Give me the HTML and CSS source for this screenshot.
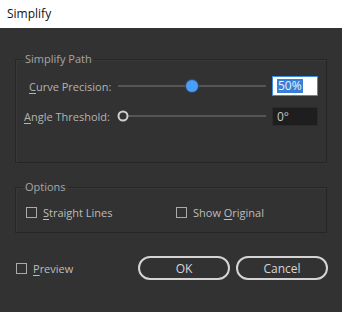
FILE: index.html
```html
<!DOCTYPE html>
<html>
<head>
<meta charset="utf-8">
<link rel="stylesheet" href="styles.css">
</head>
<body>
<div class="dialog">
  <div class="titlebar">Simplify</div>
  <div class="content">
    <fieldset class="group group-path">
      <legend>Simplify Path</legend>
      <div class="row">
        <span class="label label-curve"><u>C</u>urve Precision:</span>
        <div class="slider">
          <div class="track"></div>
          <div class="knob knob-blue" style="left: 50%"></div>
        </div>
        <div class="field field-selected"><span class="sel">50%</span></div>
      </div>
      <div class="row">
        <span class="label"><u>A</u>ngle Threshold:</span>
        <div class="slider">
          <div class="track"></div>
          <div class="knob knob-ring" style="left: 5px"></div>
        </div>
        <div class="field field-dark">0°</div>
      </div>
    </fieldset>
    <fieldset class="group group-options">
      <legend>Options</legend>
      <div class="opts">
        <label class="check check-straight"><span class="box"></span><span><u>S</u>traight Lines</span></label>
        <label class="check check-original"><span class="box"></span><span>Show <u>O</u>riginal</span></label>
      </div>
    </fieldset>
    <div class="footer">
      <label class="check check-preview"><span class="box"></span><span><u>P</u>review</span></label>
      <div class="buttons">
        <button class="btn">OK</button>
        <button class="btn">Cancel</button>
      </div>
    </div>
  </div>
</div>
</body>
</html>
```

FILE: styles.css
```css
* { box-sizing: border-box; }
html, body { margin: 0; padding: 0; }
body {
  width: 342px;
  height: 312px;
  overflow: hidden;
  font-family: "Open Sans", "Noto Sans", sans-serif;
  font-size: 11px;
  background: #323232;
}
.dialog { width: 342px; height: 312px; display: flex; flex-direction: column; }
.titlebar {
  height: 28px;
  background: #ffffff;
  color: #111;
  font-size: 12px;
  line-height: 28px;
  padding-left: 7px;
}
.content {
  flex: 1;
  background: #323232;
  padding: 24px 15px 0 15px;
  display: flex;
  flex-direction: column;
  color: #b9b9b9;
}
u { text-decoration-thickness: 1px; text-underline-offset: 2px; }
.group {
  margin: 0;
  padding: 0;
  width: 312px;
  border: 1px solid #262626;
  box-shadow: inset 1px 1px 0 #393939;
}
.group legend {
  margin-left: 7px;
  padding: 0 2px;
  line-height: 14px;
  color: #a6a6a6;
}
.group-path { padding: 10px 0 36px 0; }
.group-options { margin-top: 17px; padding: 10px 0 12px 0; }
.row {
  display: flex;
  align-items: center;
  height: 20px;
  padding-left: 8px;
}
.row + .row { margin-top: 10px; }
.label { width: 94px; white-space: nowrap; color: #b4b4b4; }
.label-curve { padding-left: 5px; }
.slider {
  position: relative;
  width: 148px;
  height: 20px;
  display: flex;
  align-items: center;
}
.track { width: 100%; height: 2px; background: #555555; }
.knob {
  position: absolute;
  top: 50%;
  transform: translate(-50%, -50%);
  border-radius: 50%;
}
.knob-blue {
  width: 12px; height: 12px;
  background: #4b9ef5;
  box-shadow: 0 0 0 1px #2d4d72;
}
.knob-ring {
  width: 11px; height: 11px;
  border: 2px solid #cfcfcf;
  background: #323232;
}
.field {
  margin-left: 6px;
  width: 46px;
  height: 20px;
  padding-left: 4px;
  display: flex;
  align-items: center;
  font-size: 12px;
}
.field-selected {
  background: #ffffff;
  border: 1px solid #3b8ce8;
}
.sel {
  background: #3a7fd6;
  color: #e8f3ff;
  line-height: 14px;
  padding: 0 1px;
}
.field-dark {
  background: #1e1e1e;
  border: 1px solid #2b2b2b;
  color: #c8c8c8;
  height: 19px;
}
.opts {
  display: flex;
  align-items: center;
  height: 16px;
  padding-left: 10px;
}
.check {
  display: flex;
  align-items: center;
  gap: 6px;
  color: #bdbdbd;
  white-space: nowrap;
}
.box {
  width: 11px;
  height: 11px;
  border: 1px solid #aaaaaa;
  display: block;
}
.check-straight { width: 150px; }
.footer {
  margin-top: 23px;
  display: flex;
  align-items: center;
  justify-content: space-between;
  padding-left: 1px;
  width: 313px;
}
.buttons { display: flex; gap: 6px; }
.btn {
  width: 92px;
  height: 24px;
  border: 2px solid #d4d4d4;
  border-radius: 12px;
  background: #323232;
  color: #d6d6d6;
  font-family: "Open Sans", "Noto Sans", sans-serif;
  font-size: 12px;
  padding: 0;
}
```
